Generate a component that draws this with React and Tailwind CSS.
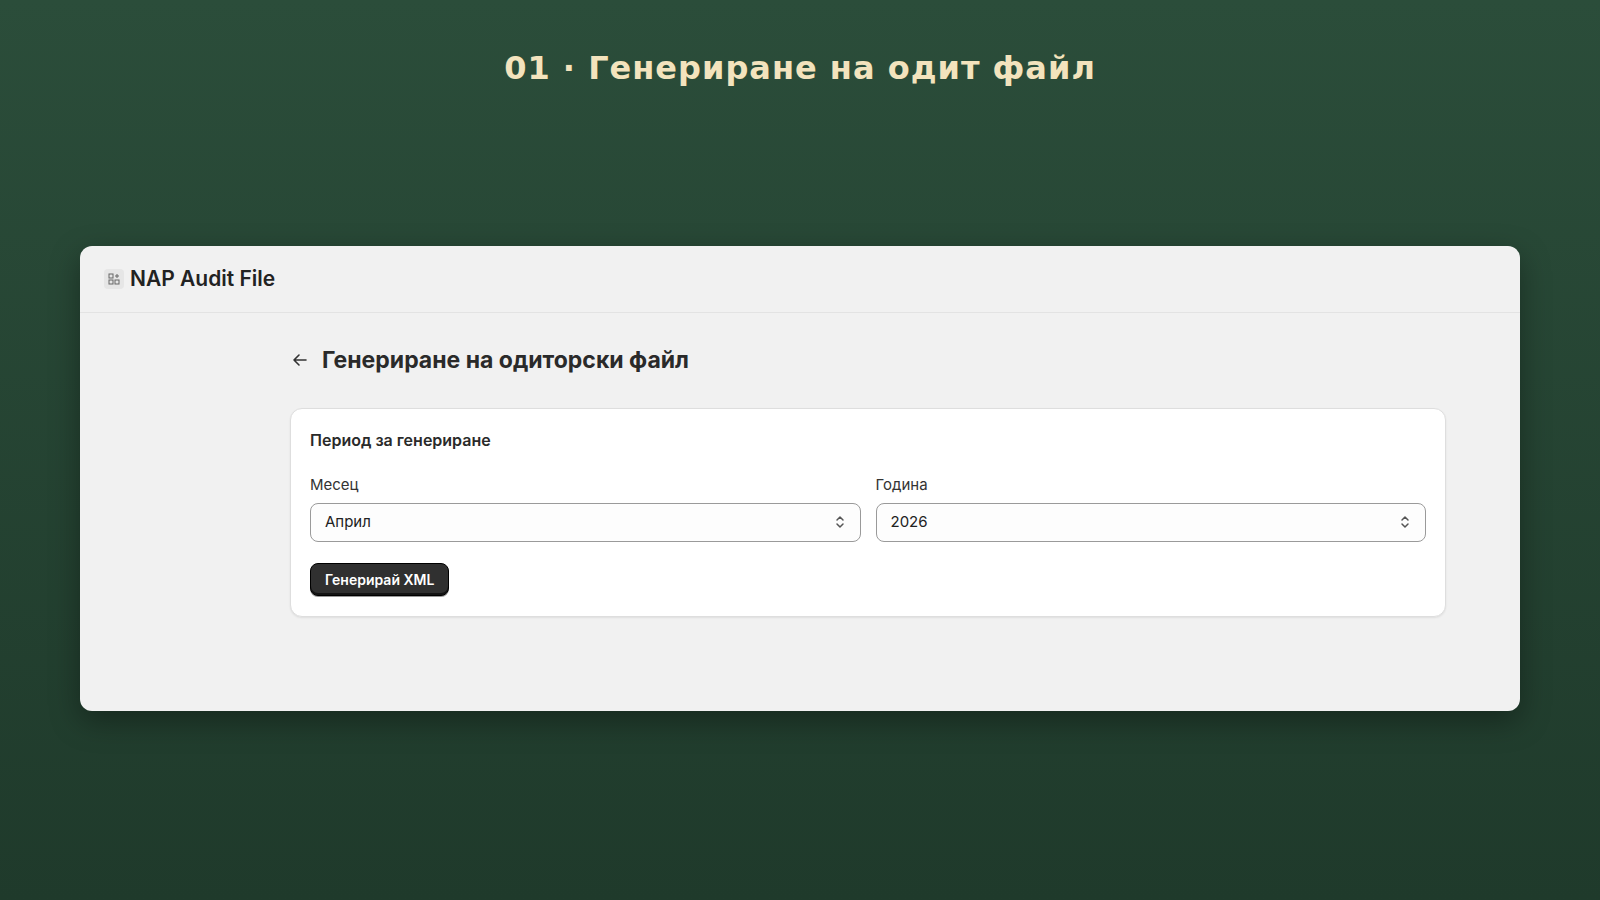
export default function App() {
  const Chev = () => (
    <svg width="12" height="18" viewBox="0 0 12 18" fill="none" stroke="#555" strokeWidth="1.5" strokeLinecap="round" strokeLinejoin="round"><path d="M3 7l3-3 3 3M3 11l3 3 3-3" /></svg>
  );
  return (
    <div className="w-[1600px] h-[900px] bg-gradient-to-b from-[#2b4d3a] to-[#1f3a2b] flex flex-col items-center" style={{ fontFamily: "Inter, 'Noto Sans', sans-serif" }}>
      <h1 className="mt-[48px] text-[32px] font-bold text-[#f3e3bd] tracking-[1px] leading-[40px]" style={{ fontFamily: "'DejaVu Sans', sans-serif" }}>01 · Генериране на одит файл</h1>
      <div className="mt-[158px] w-[1440px] h-[465px] bg-[#f1f1f1] rounded-[12px] shadow-[0_10px_30px_rgba(0,0,0,0.35)] flex flex-col overflow-hidden">
        <div className="h-[67px] border-b border-[#e3e3e3] flex items-center px-[24px] gap-[6px]">
          <div className="w-[20px] h-[20px] rounded-[4px] bg-[#e6e6e6] flex items-center justify-center">
            <svg width="12" height="12" viewBox="0 0 12 12" fill="none" stroke="#666" strokeWidth="1"><rect x="1" y="1" width="4" height="4" /><rect x="1" y="7" width="4" height="4" /><rect x="7" y="7" width="4" height="4" /><path d="M9 1v4M7 3h4" /></svg>
          </div>
          <span className="text-[21px] font-semibold text-[#222]">NAP Audit File</span>
        </div>
        <div className="pl-[210px] pr-[74px] pt-[32px]">
          <div className="flex items-center gap-[12px] h-[30px]">
            <svg width="20" height="20" viewBox="0 0 20 20" fill="none" stroke="#333" strokeWidth="1.6" strokeLinecap="round" strokeLinejoin="round"><path d="M16 10H4M9 5l-5 5 5 5" /></svg>
            <span className="text-[23px] font-bold text-[#2a2a2a]">Генериране на одиторски файл</span>
          </div>
          <div className="mt-[33px] bg-white rounded-[12px] border border-[#dedede] shadow-[0_1px_2px_rgba(0,0,0,0.08)] px-[19px] pt-[19px] pb-[20px]">
            <div className="text-[16px] font-semibold text-[#2a2a2a]">Период за генериране</div>
            <div className="mt-[22px] grid grid-cols-2 gap-[15px]">
              {[["Месец", "Април"], ["Година", "2026"]].map(([l, v]) => (
                <div key={l}>
                  <div className="text-[15px] text-[#333] mb-[6px]">{l}</div>
                  <div className="h-[39px] rounded-[8px] border border-[#9a9a9a] bg-[#fdfdfd] flex items-center justify-between px-[14px] text-[15px] text-[#222]">
                    <span>{v}</span><Chev />
                  </div>
                </div>
              ))}
            </div>
            <button className="mt-[21px] h-[33px] px-[14px] rounded-[8px] bg-[#303030] text-white text-[14px] font-semibold shadow-[inset_0_-2px_0_rgba(0,0,0,0.6),0_1px_0_rgba(0,0,0,0.4)] border border-black">Генерирай XML</button>
          </div>
        </div>
      </div>
    </div>
  );
}
